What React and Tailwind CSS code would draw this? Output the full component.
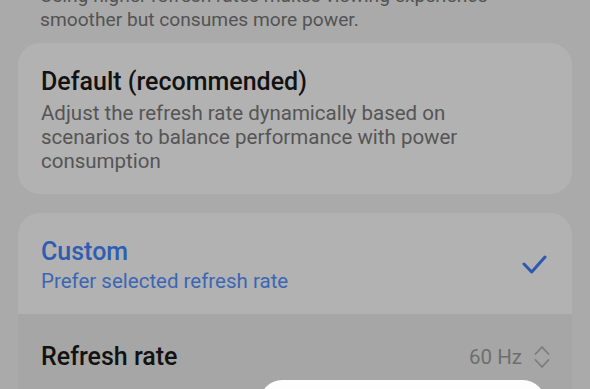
import React from "react";

export default function App() {
  return (
    <div
      className="w-[590px] h-[389px] overflow-hidden bg-[#aaaaaa] relative"
      style={{ fontFamily: "Roboto, 'Noto Sans', sans-serif" }}
    >
      <div className="px-[40px] mt-[-16.5px] text-[19.2px] leading-[24px] text-[#535353]">
        <div>Using higher refresh rates makes viewing experience</div>
        <div>smoother but consumes more power.</div>
      </div>

      <div className="mx-[18px] mt-[11.5px] rounded-[22px] bg-[#b2b2b2] px-[23px] pt-[23.5px] pb-[21px]">
        <div className="text-[25px] leading-[30px] font-medium text-[#121212]">
          Default (recommended)
        </div>
        <div className="mt-[4px] text-[20.5px] leading-[24px] text-[#555555]">
          Adjust the refresh rate dynamically based on
          <br />
          scenarios to balance performance with power
          <br />
          consumption
        </div>
      </div>

      <div className="mx-[18px] mt-[19px] rounded-t-[22px] overflow-hidden">
        <div className="bg-[#b2b2b2] pl-[23px] pr-[23px] pt-[24px] pb-[21px] flex items-center justify-between">
          <div>
            <div className="text-[25px] leading-[30px] font-medium text-[#2f5db2]">
              Custom
            </div>
            <div className="mt-[2px] text-[20.5px] leading-[24px] text-[#3c66b5]">
              Prefer selected refresh rate
            </div>
          </div>
          <svg width="26" height="22" viewBox="0 0 26 22" className="mr-[2px]">
            <path
              d="M3 10 L10.7 18 L24 3"
              fill="none"
              stroke="#2c5ab0"
              strokeWidth="3"
              strokeLinecap="round"
              strokeLinejoin="round"
            />
          </svg>
        </div>
        <div className="bg-[#a6a6a6] pl-[23px] pr-[22px] pt-[28px] pb-[30px] flex items-center justify-between">
          <div className="text-[25px] leading-[30px] font-medium text-[#121212]">
            Refresh rate
          </div>
          <div className="flex items-center gap-[12px]">
            <span className="text-[20.5px] leading-[24px] text-[#6e6e6e]">60 Hz</span>
            <svg width="16" height="24" viewBox="0 0 16 24">
              <path
                d="M1.5 9 L8 2 L14.5 9"
                fill="none"
                stroke="#7c7c7c"
                strokeWidth="1.8"
                strokeLinecap="round"
                strokeLinejoin="round"
              />
              <path
                d="M1.5 15 L8 22 L14.5 15"
                fill="none"
                stroke="#7c7c7c"
                strokeWidth="1.8"
                strokeLinecap="round"
                strokeLinejoin="round"
              />
            </svg>
          </div>
        </div>
      </div>

      <div className="absolute left-[260px] top-[380px] w-[285px] h-[40px] rounded-t-[22px] bg-[#fdfdfd]" />
    </div>
  );
}
